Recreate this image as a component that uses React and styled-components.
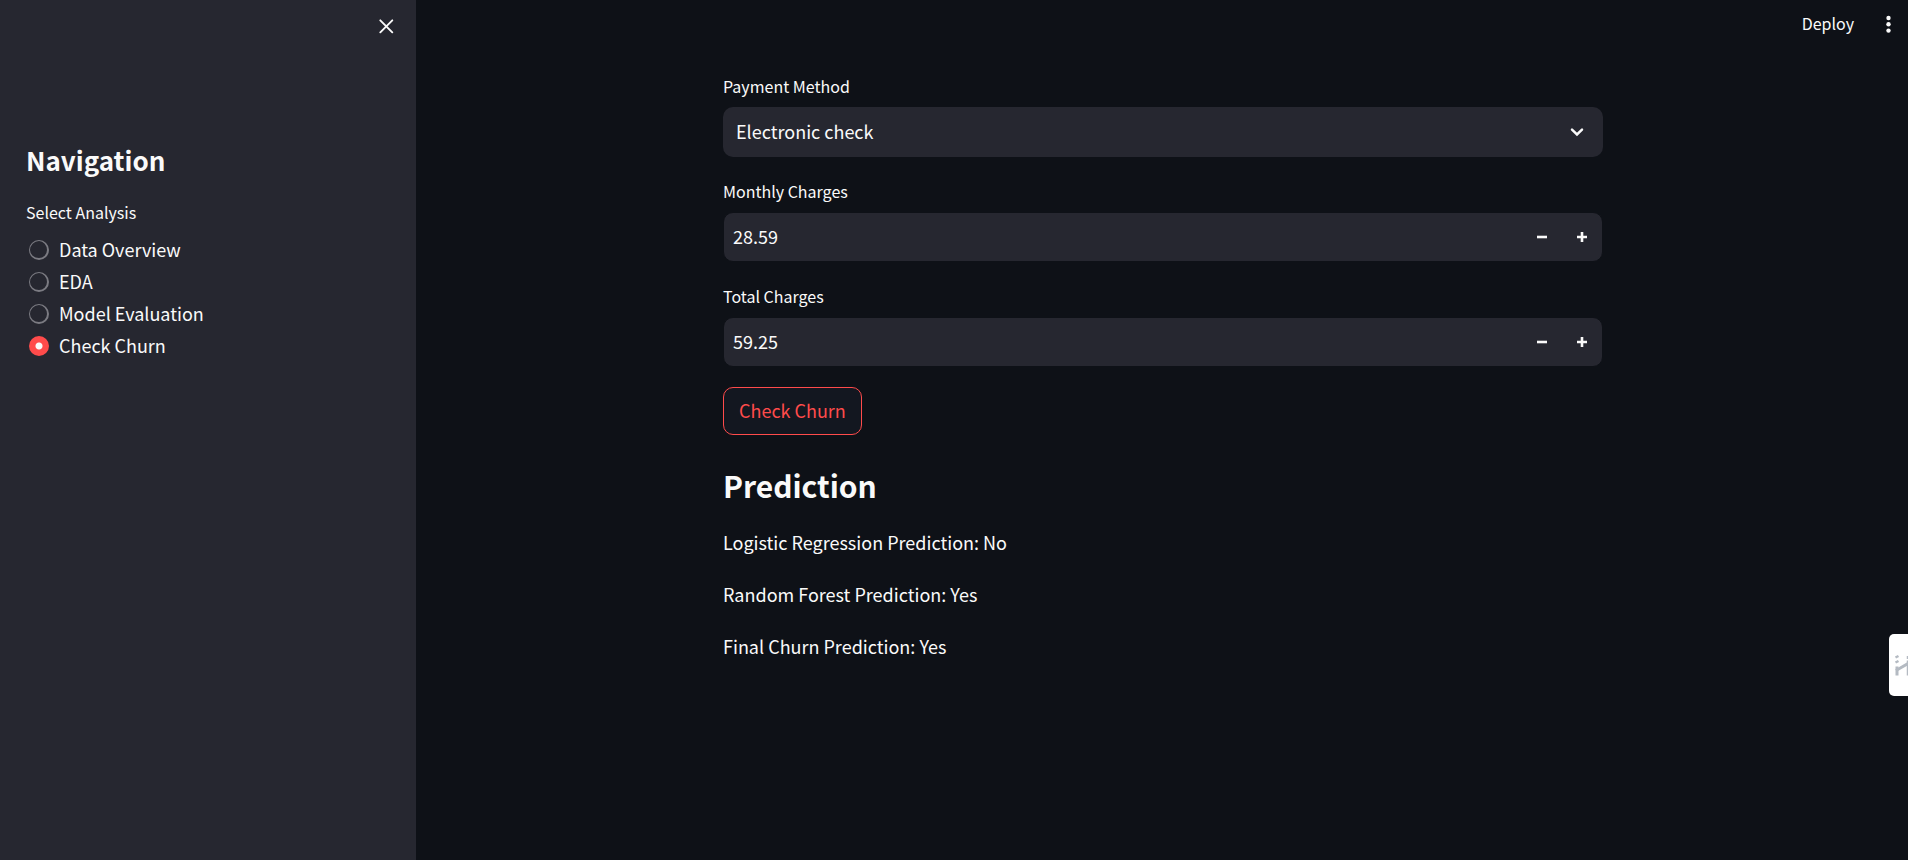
import React, { useState } from "react";
import styled, { createGlobalStyle } from "styled-components";

const GlobalStyle = createGlobalStyle`
  * { box-sizing: border-box; }
  body {
    margin: 0;
    background: #0e1117;
    color: #fafafa;
    font-family: "Noto Sans CJK SC", "Noto Sans", sans-serif;
    font-size: 18px;
    line-height: 32px;
  }
  button, input, select { font: inherit; color: inherit; }
`;

const Page = styled.div`
  display: flex;
  min-height: 100vh;
`;

const Sidebar = styled.aside`
  flex: 0 0 416px;
  background: #262730;
  padding: 14px 18px 14px 26px;
`;

const SidebarHeader = styled.div`
  display: flex;
  justify-content: flex-end;
  height: 128px;
`;

const IconButton = styled.button`
  display: flex;
  align-items: center;
  justify-content: center;
  width: ${(p) => p.$width || 24}px;
  height: ${(p) => p.$height || 24}px;
  padding: 0;
  border: 0;
  background: transparent;
`;

const SidebarTitle = styled.h2`
  margin: 0 0 22px;
  font-size: 26px;
  line-height: 36px;
  font-weight: 600;
`;

const RadioGroup = styled.fieldset`
  margin: 0;
  padding: 0;
  border: 0;
`;

const Legend = styled.legend`
  padding: 0;
  margin-bottom: 10px;
  font-size: 16px;
  line-height: 24px;
`;

const RadioRow = styled.label`
  display: flex;
  align-items: center;
  gap: 10px;
  height: 32px;
  padding-left: 3px;
`;

const RadioText = styled.span`
  padding-bottom: 2px;
`;

const Radio = styled.input`
  appearance: none;
  width: 20px;
  height: 20px;
  margin: 0;
  border-radius: 50%;
  border: solid #7b7b82;
  border-width: 1px 2px 2px 1px;
  background: #262730;
  &:checked {
    border: 0;
    background: radial-gradient(circle, #fafafa 3px, #ff4b4b 4px);
  }
`;

const Main = styled.main`
  flex: 1;
  min-width: 0;
  display: flex;
  flex-direction: column;
  padding-left: 2px;
`;

const Toolbar = styled.header`
  display: flex;
  justify-content: flex-end;
  align-items: center;
  gap: 22px;
  height: 48px;
  padding-right: 8px;
`;

const DeployButton = styled.button`
  padding: 0 0 2px;
  border: 0;
  background: transparent;
  font-size: 16px;
  line-height: 24px;
`;

const Content = styled.div`
  display: flex;
  flex-direction: column;
  gap: 20px;
  width: 100%;
  max-width: 880px;
  margin: 24px auto 0;
`;

const Field = styled.div`
  display: flex;
  flex-direction: column;
  gap: 7px;
`;

const FieldLabel = styled.label`
  font-size: 16px;
  line-height: 28px;
`;

const SelectBox = styled.div`
  display: grid;
  align-items: center;
  height: 50px;
  border-radius: 10px;
  background: #262730;
  > * { grid-area: 1 / 1; }
  > svg { justify-self: end; margin-right: 14px; pointer-events: none; }
`;

const Select = styled.select`
  appearance: none;
  width: 100%;
  height: 50px;
  padding: 0 13px 2px;
  border: 0;
  border-radius: 10px;
  background: transparent;
`;

const NumberBox = styled.div`
  display: flex;
  height: 50px;
  border: 1px solid #0e1117;
  border-radius: 10px;
  background: #262730;
`;

const NumberInput = styled.input`
  flex: 1;
  min-width: 0;
  padding: 0 9px 2px;
  border: 0;
  background: transparent;
`;

const SubmitButton = styled.button`
  align-self: flex-start;
  height: 48px;
  padding: 0 15px 2px;
  border: 1px solid #ff4b4b;
  border-radius: 10px;
  background: #131720;
  color: #ff4b4b;
`;

const ResultTitle = styled.h3`
  margin: 0;
  padding-top: 9px;
  font-size: 30px;
  line-height: 42px;
  font-weight: 600;
`;

const Result = styled.p`
  margin: 0;
`;

const SideTab = styled.button`
  position: fixed;
  right: 0;
  top: 634px;
  width: 19px;
  height: 62px;
  padding: 0;
  border: 0;
  border-radius: 5px 0 0 5px;
  background: #fff;
  overflow: hidden;
`;

const pages = ["Data Overview", "EDA", "Model Evaluation", "Check Churn"];

const results = [
  "Logistic Regression Prediction: No",
  "Random Forest Prediction: Yes",
  "Final Churn Prediction: Yes",
];

function NumberField({ id, label, initial }) {
  const [value, setValue] = useState(initial);
  const step = (d) => setValue((Number(value) + d).toFixed(2));
  return (
    <Field>
      <FieldLabel htmlFor={id}>{label}</FieldLabel>
      <NumberBox>
        <NumberInput id={id} inputMode="decimal" value={value} onChange={(e) => setValue(e.target.value)} />
        <IconButton $width={40} $height={48} aria-label={`Decrease ${label}`} onClick={() => step(-0.01)}>
          <svg width="10" height="10" viewBox="0 0 10 10"><path d="M0 5h10" stroke="#fafafa" strokeWidth="2.6" /></svg>
        </IconButton>
        <IconButton $width={40} $height={48} aria-label={`Increase ${label}`} onClick={() => step(0.01)}>
          <svg width="10" height="10" viewBox="0 0 10 10"><path d="M0 5h10M5 0v10" stroke="#fafafa" strokeWidth="2.6" /></svg>
        </IconButton>
      </NumberBox>
    </Field>
  );
}

export default function App() {
  const [page, setPage] = useState("Check Churn");
  return (
    <Page>
      <GlobalStyle />
      <Sidebar>
        <SidebarHeader>
          <IconButton aria-label="Close sidebar">
            <svg width="16" height="16" viewBox="0 0 16 16"><path d="M2.300 2.300l12 12M14.300 2.300l-12 12" stroke="#fafafa" strokeWidth="1.9" strokeLinecap="round" /></svg>
          </IconButton>
        </SidebarHeader>
        <SidebarTitle>Navigation</SidebarTitle>
        <RadioGroup>
          <Legend>Select Analysis</Legend>
          {pages.map((name) => (
            <RadioRow key={name}>
              <Radio type="radio" name="page" checked={page === name} onChange={() => setPage(name)} />
              <RadioText>{name}</RadioText>
            </RadioRow>
          ))}
        </RadioGroup>
      </Sidebar>
      <Main>
        <Toolbar>
          <DeployButton>Deploy</DeployButton>
          <IconButton aria-label="Main menu">
            <svg width="5" height="18" viewBox="0 0 5 18" fill="#fafafa">
              <circle cx="2.500" cy="3" r="2.200" /><circle cx="2.500" cy="9.300" r="2.200" /><circle cx="2.500" cy="15.600" r="2.200" />
            </svg>
          </IconButton>
        </Toolbar>
        <Content>
          <Field>
            <FieldLabel htmlFor="payment">Payment Method</FieldLabel>
            <SelectBox>
              <Select id="payment" defaultValue="Electronic check">
                <option>Electronic check</option>
                <option>Mailed check</option>
              </Select>
              <svg width="24" height="24" viewBox="0 0 24 24" fill="none"><path d="M7 9.600l5 4.800 5-4.800" stroke="#fafafa" strokeWidth="2.500" strokeLinecap="round" /></svg>
            </SelectBox>
          </Field>
          <NumberField id="monthly" label="Monthly Charges" initial="28.59" />
          <NumberField id="total" label="Total Charges" initial="59.25" />
          <SubmitButton>Check Churn</SubmitButton>
          <ResultTitle>Prediction</ResultTitle>
          {results.map((r) => <Result key={r}>{r}</Result>)}
        </Content>
      </Main>
      <SideTab aria-label="Open side panel">
        <svg width="19" height="62" viewBox="0 0 19 62" fill="none" stroke="#b4bac2">
          <path d="M6.500 23.500l3-1.500M6.500 28.500l3-1.500" strokeWidth="2.500" />
          <path d="M8 41.500v-9" strokeWidth="3" />
          <path d="M7 36.500L19 29.500" strokeWidth="3" />
          <path d="M18.500 22v3M18.500 26.500v15" strokeWidth="1.500" />
        </svg>
      </SideTab>
    </Page>
  );
}
